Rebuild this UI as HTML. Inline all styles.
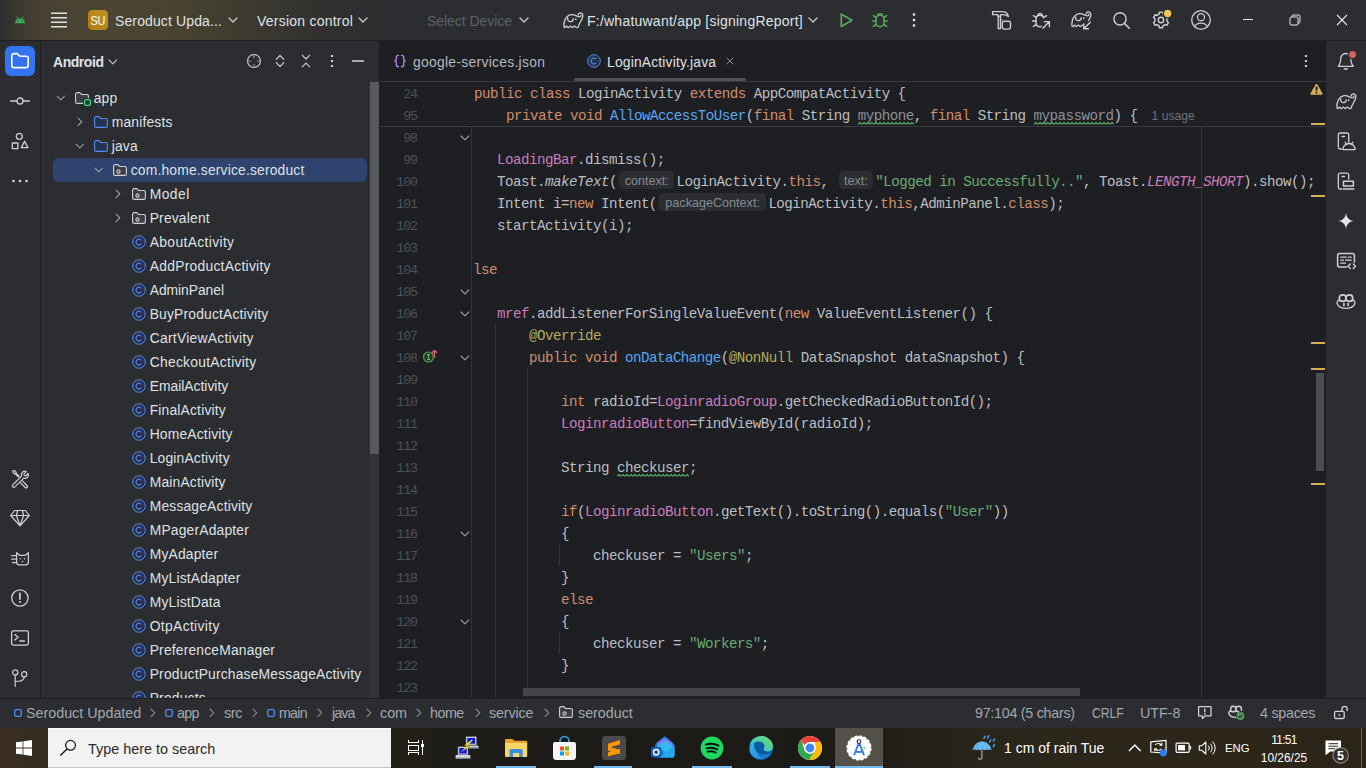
<!DOCTYPE html><html><head><meta charset="utf-8"><title>LoginActivity.java</title><style>
*{box-sizing:border-box;margin:0;padding:0}
html,body{width:1366px;height:768px;overflow:hidden;background:#2b2d30;font-family:"Liberation Sans",sans-serif;color:#dfe1e5}
#root{position:relative;width:1366px;height:768px;overflow:hidden}
#root>div,#root>svg{position:absolute}
svg{overflow:visible}
.tt{font-size:14px;letter-spacing:.23px;color:#dfe1e5;white-space:nowrap;line-height:20px}
.row{height:24px;line-height:24px;font-size:13.85px;letter-spacing:.18px;color:#dfe1e5;white-space:nowrap}
.tab{font-size:13.85px;letter-spacing:.18px;line-height:20px;white-space:nowrap}
.ln{left:380px;width:37px;text-align:right;font-family:"Liberation Mono",monospace;font-size:13.33px;letter-spacing:-1.07px;color:#4b5059;height:22px;line-height:22px;white-space:pre}
.cl{font-family:"Liberation Mono",monospace;font-size:14.2px;letter-spacing:-0.5214px;color:#bcbec4;height:22px;line-height:22px;white-space:pre}
.k{color:#cf8e6d}.s{color:#6aab73}.f{color:#c77dbb}.m{color:#56a8f5}.a{color:#b3ae60}.i{font-style:italic}
.fi{color:#c77dbb;font-style:italic}
.u{color:#8d8f95}
.hint{display:inline-block;font-family:"Liberation Sans",sans-serif;font-size:12.6px;color:#868a91;background:#2b2d30;border-radius:4px;height:18px;line-height:20px;vertical-align:1px;text-align:center;margin:0 2.5px;letter-spacing:0}
.usage{letter-spacing:0;font-family:"Liberation Sans",sans-serif;font-size:12.2px;color:#6f737a;margin-left:14px}
.st{height:29px;line-height:31px;font-size:14.3px;color:#a3a7af;white-space:nowrap}
</style></head><body><div id="root"><div style="left:0px;top:0px;width:1366px;height:40px;background:linear-gradient(90deg,#2d2e30 0px,#3a382f 18px,#464132 40px,#4b4533 90px,#48432f 180px,#3d3b30 240px,#34332f 300px,#2e2e30 360px,#2b2d30 410px);"></div><div style="left:0px;top:40px;width:1366px;height:1px;background:#1e1f22;"></div><div style="left:0px;top:41px;width:40px;height:657px;background:#2b2d30;"></div><div style="left:40px;top:41px;width:1px;height:657px;background:#1e1f22;"></div><div style="left:41px;top:41px;width:338px;height:657px;background:#2b2d30;"></div><div style="left:379px;top:41px;width:1px;height:657px;background:#1e1f22;"></div><div style="left:380px;top:41px;width:946px;height:657px;background:#1e1f22;"></div><div style="left:1326px;top:41px;width:40px;height:657px;background:#2b2d30;"></div><div style="left:0px;top:698px;width:1366px;height:1px;background:#1e1f22;"></div><div style="left:0px;top:699px;width:1366px;height:29px;background:#2b2d30;"></div><svg style="left:14px;top:14px" width="12" height="10" viewBox="0 0 12 10"><path d="M1 9.200a5 4.800 0 0 1 10 0z" fill="#37b05c"/><path d="M2.800 3l1.400 2.200M9.200 3l-1.400 2.200" stroke="#37b05c" stroke-width="1" stroke-linecap="round"/><circle cx="3.900" cy="7" r=".65" fill="#3b3a30"/><circle cx="8.100" cy="7" r=".65" fill="#3b3a30"/></svg><svg style="left:51px;top:12px" width="16" height="16" viewBox="0 0 16 16"><path d="M0 1.200h16M0 5.700h16M0 10.200h16M0 14.700h16" stroke="#dfe1e5" stroke-width="1.400"/></svg><div style="left:88px;top:10px;width:20px;height:20px;border-radius:4.500px;background:linear-gradient(45deg,#b47c18,#bd9420);color:#fff;font-size:13px;text-align:center;line-height:21px;letter-spacing:-.2px"><span style="display:inline-block;transform:scaleX(.84)">SU</span></div><div class="tt" style="left:115px;top:11px;letter-spacing:.12px">Seroduct Upda...</div><svg style="left:228px;top:17.0px" width="10" height="6" viewBox="0 0 10 6"><path d="M1 1l4 4 4-4" fill="none" stroke="#ced0d6" stroke-width="1.2" stroke-linejoin="round" stroke-linecap="round"/></svg><div class="tt" style="left:257px;top:11px;">Version control</div><svg style="left:358px;top:17.0px" width="10" height="6" viewBox="0 0 10 6"><path d="M1 1l4 4 4-4" fill="none" stroke="#ced0d6" stroke-width="1.2" stroke-linejoin="round" stroke-linecap="round"/></svg><div class="tt" style="left:427px;top:11px;color:#5f6269;letter-spacing:-.05px">Select Device</div><svg style="left:519px;top:17.0px" width="10" height="6" viewBox="0 0 10 6"><path d="M1 1l4 4 4-4" fill="none" stroke="#ced0d6" stroke-width="1.2" stroke-linejoin="round" stroke-linecap="round"/></svg><svg style="left:563px;top:12.3px" width="20" height="16" viewBox="0 0 20 16"><path d="M15.3 2.9C15.2 1.3 17 .4 18.4 1.100C20 1.900 20 4.500 19.200 6.500C18 9.500 15.600 12 15.200 15.200Q13.600 16.100 12.600 14.900Q11.400 13.200 10.200 14.900Q9.300 16.100 8.400 14.900Q7.300 13.200 6.200 14.900Q5.300 16.100 4.400 14.900Q3.500 13.400 2.800 14.900Q2 16.100 1 15C.300 10 2.500 3.200 8.500 2.600C12 2.300 14 4.800 16.500 4.900C17.600 4.900 18.200 4 17.800 3.300" fill="none" stroke="#ced0d6" stroke-width="1.3" stroke-linejoin="round" stroke-linecap="round"/><path d="M4.700 5.800C4.200 8.500 6 10 8 9.600C9.600 9.200 10.400 8 10.200 6.600" fill="none" stroke="#ced0d6" stroke-width="1.3" stroke-linejoin="round" stroke-linecap="round"/><circle cx="12.800" cy="7.200" r=".85" fill="#ced0d6"/></svg><div class="tt" style="left:587px;top:11px;">F:/whatuwant/app [signingReport]</div><svg style="left:808px;top:17.0px" width="10" height="6" viewBox="0 0 10 6"><path d="M1 1l4 4 4-4" fill="none" stroke="#ced0d6" stroke-width="1.2" stroke-linejoin="round" stroke-linecap="round"/></svg><svg style="left:838px;top:11px" width="18" height="18" viewBox="0 0 18 18"><path d="M3.300 3.200L14 9.300 3.300 15.500z" fill="none" stroke="#5aa860" stroke-width="1.7" stroke-linejoin="round" stroke-linecap="round"/></svg><svg style="left:870px;top:9px" width="20" height="20" viewBox="0 0 20 20"><path d="M10 6.200c-2.400 0-4 1.700-4 4v3.300c0 2.400 1.700 4.200 4 4.200s4-1.800 4-4.200v-3.300c0-2.300-1.600-4-4-4z" fill="none" stroke="#5aa860" stroke-width="1.5" stroke-linejoin="round" stroke-linecap="round"/><path d="M7.400 6.600a2.700 2.900 0 0 1 5.200 0" fill="none" stroke="#5aa860" stroke-width="1.5" stroke-linejoin="round" stroke-linecap="round"/><path d="M6 12H2.600M6.400 8.800l-3-2.200M6.400 15.300l-3 2.100M14 12h3.400M13.600 8.800l3-2.200M13.600 15.300l3 2.100" fill="none" stroke="#5aa860" stroke-width="1.5" stroke-linejoin="round" stroke-linecap="round"/></svg><svg style="left:912px;top:12px" width="4" height="16" viewBox="0 0 4 16"><rect x=".800" y="1.300" width="2.500" height="2.500" rx=".700" fill="#dfe1e5"/><rect x=".800" y="6.800" width="2.500" height="2.500" rx=".700" fill="#dfe1e5"/><rect x=".800" y="12.300" width="2.500" height="2.500" rx=".700" fill="#dfe1e5"/></svg><svg style="left:991px;top:10px" width="22" height="20" viewBox="0 0 22 20"><path d="M1.600 1.700h9.500c3.300 0 5.700 1.800 6.300 4.800-1.600-1.300-3.200-1.800-5.400-1.800H9.700v1.500H6.800V4.700H1.600z" fill="none" stroke="#ced0d6" stroke-width="1.3" stroke-linejoin="round" stroke-linecap="round"/><path d="M7.200 6.400v12.300h2.200V6.400" fill="none" stroke="#ced0d6" stroke-width="1.3" stroke-linejoin="round" stroke-linecap="round"/><path d="M9.400 10h1.600" fill="none" stroke="#ced0d6" stroke-width="1.2" stroke-linejoin="round" stroke-linecap="round"/><rect x="11.300" y="11.300" width="8.200" height="7.800" rx="2" fill="none" stroke="#ced0d6" stroke-width="1.4" stroke-linejoin="round" stroke-linecap="round"/></svg><svg style="left:1030px;top:9px" width="22" height="22" viewBox="0 0 22 22"><path d="M13.600 8.500C13 7 11.600 6.200 10 6.200c-2.400 0-4 1.700-4 4v3.300c0 2.400 1.700 4.200 4 4.200.500 0 1-.100 1.400-.250" fill="none" stroke="#ced0d6" stroke-width="1.4" stroke-linejoin="round" stroke-linecap="round"/><path d="M7.400 6.600a2.700 2.900 0 0 1 5.200 0" fill="none" stroke="#ced0d6" stroke-width="1.4" stroke-linejoin="round" stroke-linecap="round"/><path d="M6 12H2.600M6.400 8.800l-3-2.200M6.400 15.300l-3 2.100M13.600 8.800l3-2.200" fill="none" stroke="#ced0d6" stroke-width="1.4" stroke-linejoin="round" stroke-linecap="round"/><path d="M12.800 19.200l6.400-6.400M14.300 12.600h5.100v5.100" fill="none" stroke="#ced0d6" stroke-width="1.4" stroke-linejoin="round" stroke-linecap="round"/></svg><svg style="left:0;top:0" width="0" height="0"><defs><clipPath id="ec"><path d="M-1-1h22v11h-9v8h-13z"/></clipPath></defs></svg><svg style="left:1071px;top:11.3px" width="20" height="16" viewBox="0 0 20 16"><g clip-path="url(#ec)"><path d="M15.3 2.9C15.2 1.3 17 .4 18.4 1.100C20 1.900 20 4.500 19.200 6.500C18 9.500 15.600 12 15.200 15.200Q13.600 16.100 12.600 14.900Q11.400 13.200 10.200 14.900Q9.300 16.100 8.400 14.900Q7.300 13.200 6.200 14.900Q5.300 16.100 4.400 14.900Q3.500 13.400 2.800 14.900Q2 16.100 1 15C.300 10 2.500 3.200 8.500 2.600C12 2.300 14 4.800 16.500 4.900C17.600 4.900 18.200 4 17.800 3.300" fill="none" stroke="#ced0d6" stroke-width="1.3" stroke-linejoin="round" stroke-linecap="round"/><path d="M4.700 5.800C4.200 8.500 6 10 8 9.600C9.600 9.200 10.400 8 10.200 6.600" fill="none" stroke="#ced0d6" stroke-width="1.3" stroke-linejoin="round" stroke-linecap="round"/><circle cx="12.800" cy="7.200" r=".85" fill="#ced0d6"/></g></svg><svg style="left:1082px;top:21px" width="10" height="9" viewBox="0 0 10 9"><path d="M8.300 1.200L2 7.500M1.800 3v4.700h4.700" fill="none" stroke="#ced0d6" stroke-width="1.4" stroke-linejoin="round" stroke-linecap="round"/></svg><svg style="left:1111px;top:10px" width="20" height="20" viewBox="0 0 20 20"><circle cx="9" cy="8.900" r="6.100" fill="none" stroke="#ced0d6" stroke-width="1.4" stroke-linejoin="round" stroke-linecap="round"/><path d="M13.500 13.500l4.700 4.600" fill="none" stroke="#ced0d6" stroke-width="1.5" stroke-linejoin="round" stroke-linecap="round"/></svg><svg style="left:1150px;top:8px" width="24" height="24" viewBox="0 0 24 24"><path d="M9.36 4.27L12.64 4.27L12.89 6.20L15.08 7.47L16.87 6.71L18.51 9.56L16.97 10.73L16.97 13.27L18.51 14.44L16.87 17.29L15.08 16.53L12.89 17.80L12.64 19.73L9.36 19.73L9.11 17.80L6.92 16.53L5.13 17.29L3.49 14.44L5.03 13.27L5.03 10.73L3.49 9.56L5.13 6.71L6.92 7.47L9.11 6.20z" fill="none" stroke="#ced0d6" stroke-width="1.4" stroke-linejoin="round" stroke-linecap="round"/><circle cx="11" cy="12" r="2.700" fill="none" stroke="#ced0d6" stroke-width="1.4" stroke-linejoin="round" stroke-linecap="round"/><circle cx="17.600" cy="5.500" r="5" fill="#2b2d30"/><circle cx="17.600" cy="5.500" r="3.700" fill="#f2c55c"/></svg><svg style="left:1190px;top:9px" width="22" height="22" viewBox="0 0 22 22"><circle cx="11" cy="11" r="9.300" fill="none" stroke="#ced0d6" stroke-width="1.3" stroke-linejoin="round" stroke-linecap="round"/><circle cx="11" cy="8.200" r="3.500" fill="none" stroke="#ced0d6" stroke-width="1.3" stroke-linejoin="round" stroke-linecap="round"/><path d="M4.600 17.700c1.200-2.400 3.600-3.500 6.400-3.500s5.200 1.100 6.400 3.500" fill="none" stroke="#ced0d6" stroke-width="1.3" stroke-linejoin="round" stroke-linecap="round"/></svg><div style="left:1243px;top:19px;width:10px;height:1px;background:#e6e7ea;"></div><svg style="left:1289px;top:14px" width="12" height="12" viewBox="0 0 12 12"><rect x="1" y="3" width="8" height="8" rx="1" fill="none" stroke="#e6e7ea" stroke-width="1"/><path d="M3 3V2a1 1 0 0 1 1-1h6a1 1 0 0 1 1 1v6a1 1 0 0 1-1 1H9" fill="none" stroke="#e6e7ea" stroke-width="1"/></svg><svg style="left:1337px;top:15px" width="10" height="10" viewBox="0 0 10 10"><path d="M0 0l10 10M10 0L0 10" stroke="#e6e7ea" stroke-width="1.100"/></svg><div style="left:5px;top:46px;width:30px;height:30px;background:#3574f0;border-radius:6px"></div><svg style="left:10px;top:52px" width="20" height="18" viewBox="0 0 20 18"><path d="M1.800 3.600a2 2 0 0 1 2-2h3.600l2.400 2.600h6.400a2 2 0 0 1 2 2v7.400a2 2 0 0 1-2 2H3.800a2 2 0 0 1-2-2z" fill="none" stroke="#fff" stroke-width="1.6" stroke-linejoin="round" stroke-linecap="round"/></svg><svg style="left:10px;top:96px" width="20" height="10" viewBox="0 0 20 10"><circle cx="10" cy="5" r="3" fill="none" stroke="#ced0d6" stroke-width="1.3" stroke-linejoin="round" stroke-linecap="round"/><path d="M.500 5h6.300M13.200 5h6.300" fill="none" stroke="#ced0d6" stroke-width="1.3" stroke-linejoin="round" stroke-linecap="round"/></svg><svg style="left:10px;top:131px" width="20" height="20" viewBox="0 0 20 20"><circle cx="9.300" cy="5.300" r="3" fill="none" stroke="#ced0d6" stroke-width="1.3" stroke-linejoin="round" stroke-linecap="round"/><rect x="2.300" y="12" width="5.600" height="5.600" fill="none" stroke="#ced0d6" stroke-width="1.3" stroke-linejoin="round" stroke-linecap="round"/><path d="M14.600 10.300l3.300 6.300h-6.600z" fill="none" stroke="#ced0d6" stroke-width="1.3" stroke-linejoin="round" stroke-linecap="round"/></svg><svg style="left:10px;top:179px" width="20" height="4" viewBox="0 0 20 4"><circle cx="3.500" cy="2" r="1.300" fill="#ced0d6"/><circle cx="10" cy="2" r="1.300" fill="#ced0d6"/><circle cx="16.500" cy="2" r="1.300" fill="#ced0d6"/></svg><svg style="left:10.700px;top:469px" width="18.600" height="18.600" viewBox="0 0 20 20"><path d="M1.900 17l9.500-9.500a3.700 3.700 0 0 1 5-4.700l-2.500 2.500.300 1.700 1.700.300 2.500-2.500a3.700 3.700 0 0 1-4.700 5L4.200 19.300a1.600 1.600 0 0 1-2.300-2.300z" fill="none" stroke="#ced0d6" stroke-width="1.3" stroke-linejoin="round" stroke-linecap="round"/><path d="M12.300 12.800l5 5.200a1.300 1.300 0 0 1-1.900 1.900l-5.200-5M7.800 8.400L4.900 5.500 2.500 4.300 1.800 2.300 2.600 1.600l2 .700 1.200 2.400 2.900 2.900" fill="none" stroke="#ced0d6" stroke-width="1.3" stroke-linejoin="round" stroke-linecap="round"/></svg><svg style="left:10px;top:509px" width="20" height="18" viewBox="0 0 20 18"><path d="M4.600 1.500h10.800l3.900 5L10 16.800.700 6.500zM.700 6.500h18.600M7.600 1.500L6.400 6.500 10 16.800l3.600-10.300-1.200-5" fill="none" stroke="#ced0d6" stroke-width="1.2" stroke-linejoin="round" stroke-linecap="round"/></svg><svg style="left:10px;top:551px" width="20" height="16" viewBox="0 0 20 16"><path d="M6.600 1.600l3 2.700h5.800l3-2.700v9.400a2.800 2.800 0 0 1-2.800 2.800H9.400a2.800 2.800 0 0 1-2.800-2.800zM1.600 4.500h5M1.600 8h5M2.600 11.500h4" fill="none" stroke="#ced0d6" stroke-width="1.25" stroke-linejoin="round" stroke-linecap="round"/><circle cx="10.400" cy="7.700" r=".8" fill="#ced0d6"/><circle cx="14.600" cy="7.700" r=".8" fill="#ced0d6"/><path d="M11.700 10.300h1.600l-.800.900z" fill="#ced0d6" stroke="#ced0d6" stroke-width=".5"/></svg><svg style="left:10px;top:588px" width="20" height="20" viewBox="0 0 20 20"><circle cx="9.900" cy="10" r="8.200" fill="none" stroke="#ced0d6" stroke-width="1.3" stroke-linejoin="round" stroke-linecap="round"/><path d="M9.900 5.300v5.800" fill="none" stroke="#ced0d6" stroke-width="1.7" stroke-linejoin="round" stroke-linecap="round"/><circle cx="9.900" cy="14" r="1.050" fill="#ced0d6"/></svg><svg style="left:10px;top:629px" width="20" height="18" viewBox="0 0 20 18"><rect x="1.600" y="1.900" width="16.800" height="14.200" rx="1.800" fill="none" stroke="#ced0d6" stroke-width="1.3" stroke-linejoin="round" stroke-linecap="round"/><path d="M4.800 5.600l3.400 2.700-3.400 2.700M9.800 12h4.600" fill="none" stroke="#ced0d6" stroke-width="1.3" stroke-linejoin="round" stroke-linecap="round"/></svg><svg style="left:10px;top:668px" width="20" height="20" viewBox="0 0 20 20"><circle cx="5.200" cy="4.500" r="2.600" fill="none" stroke="#ced0d6" stroke-width="1.2" stroke-linejoin="round" stroke-linecap="round"/><circle cx="14.200" cy="6.200" r="2.600" fill="none" stroke="#ced0d6" stroke-width="1.2" stroke-linejoin="round" stroke-linecap="round"/><path d="M5.200 7.200v11.300M14.200 8.900c0 3.600-3.500 4.600-9 4.600" fill="none" stroke="#ced0d6" stroke-width="1.2" stroke-linejoin="round" stroke-linecap="round"/></svg><div class="row" style="left:53px;top:52px;font-weight:bold;font-size:14px;letter-spacing:-.45px;height:20px;line-height:20px">Android</div><svg style="left:108.2px;top:59.1px" width="9.6" height="5.8" viewBox="0 0 9.6 5.8"><path d="M1 1l3.8 3.8 3.8-3.8" fill="none" stroke="#c0c3c9" stroke-width="1.1" stroke-linejoin="round" stroke-linecap="round"/></svg><svg style="left:246px;top:53px" width="16" height="16" viewBox="0 0 16 16"><circle cx="8" cy="8" r="6.500" fill="none" stroke="#ced0d6" stroke-width="1.1" stroke-linejoin="round" stroke-linecap="round"/><path d="M8 1.500v3M8 11.500v3M1.500 8h3M11.500 8h3" fill="none" stroke="#9da0a8" stroke-width="1.1" stroke-linejoin="round" stroke-linecap="round"/></svg><svg style="left:275px;top:54px" width="10" height="14" viewBox="0 0 10 14"><path d="M1.200 5.300L5 1.500l3.800 3.800M1.200 8.700L5 12.500l3.800-3.800" fill="none" stroke="#ced0d6" stroke-width="1.1" stroke-linejoin="round" stroke-linecap="round"/></svg><svg style="left:301px;top:54px" width="10" height="14" viewBox="0 0 10 14"><path d="M1.200 1.200L5 5l3.800-3.800M1.200 12.900L5 9.100l3.800 3.800" fill="none" stroke="#ced0d6" stroke-width="1.1" stroke-linejoin="round" stroke-linecap="round"/></svg><svg style="left:330px;top:54px" width="4" height="14" viewBox="0 0 4 14"><rect x=".900" y=".900" width="2.200" height="2.200" rx=".500" fill="#ced0d6"/><rect x=".900" y="5.900" width="2.200" height="2.200" rx=".500" fill="#ced0d6"/><rect x=".900" y="10.900" width="2.200" height="2.200" rx=".500" fill="#ced0d6"/></svg><div style="left:352px;top:60.4px;width:12px;height:1.3px;background:#a8abb2;"></div><div style="left:53px;top:158px;width:314px;height:24px;background:#2e436e;border-radius:5px"></div><div style="left:369px;top:82px;width:10px;height:616px;background:#313336;"></div><div style="left:370px;top:82px;width:8.5px;height:372px;background:#58595c;"></div><svg style="left:55.800000000000004px;top:95.1px" width="9.6" height="5.8" viewBox="0 0 9.6 5.8"><path d="M1 1l3.8 3.8 3.8-3.8" fill="none" stroke="#a6a9af" stroke-width="1.05" stroke-linejoin="round" stroke-linecap="round"/></svg><svg style="left:75px;top:92px" width="14" height="12" viewBox="0 0 14 12"><path d="M.600 2.100A1.500 1.500 0 0 1 2.100.600h2.700l1.900 1.900h5.200a1.500 1.500 0 0 1 1.500 1.500v5.900a1.500 1.500 0 0 1-1.500 1.500H2.100A1.500 1.500 0 0 1 .600 9.900z" fill="#3c3e43" stroke="#ced0d6" stroke-width="1.100" stroke-linejoin="round"/></svg><svg style="left:83px;top:98px" width="9" height="9" viewBox="0 0 9 9"><rect x="0" y="0" width="9" height="9" fill="#2b2d30"/><rect x="1.600" y="1.600" width="5.800" height="5.800" rx="1.400" fill="#253627" stroke="#3ddc84" stroke-width="1.300"/></svg><div class="row" style="left:93.7px;top:86px;">app</div><svg style="left:76.89999999999999px;top:117.2px" width="5.8" height="9.6" viewBox="0 0 5.8 9.6"><path d="M1 1l3.8 3.8-3.8 3.8" fill="none" stroke="#a6a9af" stroke-width="1.05" stroke-linejoin="round" stroke-linecap="round"/></svg><svg style="left:94px;top:116px" width="14" height="12" viewBox="0 0 14 12"><path d="M.600 2.100A1.500 1.500 0 0 1 2.100.600h2.700l1.900 1.900h5.200a1.500 1.500 0 0 1 1.500 1.500v5.900a1.500 1.500 0 0 1-1.500 1.500H2.100A1.500 1.500 0 0 1 .600 9.900z" fill="#25324d" stroke="#548af7" stroke-width="1.100" stroke-linejoin="round"/></svg><div class="row" style="left:111.7px;top:110px;">manifests</div><svg style="left:74.8px;top:143.1px" width="9.6" height="5.8" viewBox="0 0 9.6 5.8"><path d="M1 1l3.8 3.8 3.8-3.8" fill="none" stroke="#a6a9af" stroke-width="1.05" stroke-linejoin="round" stroke-linecap="round"/></svg><svg style="left:94px;top:140px" width="14" height="12" viewBox="0 0 14 12"><path d="M.600 2.100A1.500 1.500 0 0 1 2.100.600h2.700l1.900 1.900h5.200a1.500 1.500 0 0 1 1.500 1.500v5.900a1.500 1.500 0 0 1-1.500 1.500H2.100A1.500 1.500 0 0 1 .600 9.900z" fill="#25324d" stroke="#548af7" stroke-width="1.100" stroke-linejoin="round"/></svg><div class="row" style="left:111.7px;top:134px;">java</div><svg style="left:93.8px;top:167.1px" width="9.6" height="5.8" viewBox="0 0 9.6 5.8"><path d="M1 1l3.8 3.8 3.8-3.8" fill="none" stroke="#a6a9af" stroke-width="1.05" stroke-linejoin="round" stroke-linecap="round"/></svg><svg style="left:113px;top:164px" width="14" height="12" viewBox="0 0 14 12"><path d="M.600 2.100A1.500 1.500 0 0 1 2.100.600h2.700l1.900 1.900h5.200a1.500 1.500 0 0 1 1.500 1.500v5.900a1.500 1.500 0 0 1-1.500 1.500H2.100A1.500 1.500 0 0 1 .600 9.900z" fill="#3c3e43" stroke="#ced0d6" stroke-width="1.100" stroke-linejoin="round"/></svg><svg style="left:115.6px;top:168.5px" width="5" height="5" viewBox="0 0 5 5"><circle cx="2.500" cy="2.500" r="1.600" fill="none" stroke="#ced0d6" stroke-width="1.100"/></svg><div class="row" style="left:130.7px;top:158px;">com.home.service.seroduct</div><svg style="left:114.89999999999999px;top:189.2px" width="5.8" height="9.6" viewBox="0 0 5.8 9.6"><path d="M1 1l3.8 3.8-3.8 3.8" fill="none" stroke="#a6a9af" stroke-width="1.05" stroke-linejoin="round" stroke-linecap="round"/></svg><svg style="left:132px;top:188px" width="14" height="12" viewBox="0 0 14 12"><path d="M.600 2.100A1.500 1.500 0 0 1 2.100.600h2.700l1.900 1.900h5.200a1.500 1.500 0 0 1 1.500 1.500v5.900a1.500 1.500 0 0 1-1.500 1.500H2.100A1.500 1.500 0 0 1 .600 9.900z" fill="#3c3e43" stroke="#ced0d6" stroke-width="1.100" stroke-linejoin="round"/></svg><svg style="left:134.6px;top:192.5px" width="5" height="5" viewBox="0 0 5 5"><circle cx="2.500" cy="2.500" r="1.600" fill="none" stroke="#ced0d6" stroke-width="1.100"/></svg><div class="row" style="left:149.7px;top:182px;letter-spacing:0.47px">Model</div><svg style="left:114.89999999999999px;top:213.2px" width="5.8" height="9.6" viewBox="0 0 5.8 9.6"><path d="M1 1l3.8 3.8-3.8 3.8" fill="none" stroke="#a6a9af" stroke-width="1.05" stroke-linejoin="round" stroke-linecap="round"/></svg><svg style="left:132px;top:212px" width="14" height="12" viewBox="0 0 14 12"><path d="M.600 2.100A1.500 1.500 0 0 1 2.100.600h2.700l1.900 1.900h5.200a1.500 1.500 0 0 1 1.500 1.500v5.900a1.500 1.500 0 0 1-1.500 1.500H2.100A1.500 1.500 0 0 1 .600 9.900z" fill="#3c3e43" stroke="#ced0d6" stroke-width="1.100" stroke-linejoin="round"/></svg><svg style="left:134.6px;top:216.5px" width="5" height="5" viewBox="0 0 5 5"><circle cx="2.500" cy="2.500" r="1.600" fill="none" stroke="#ced0d6" stroke-width="1.100"/></svg><div class="row" style="left:149.7px;top:206px;">Prevalent</div><svg style="left:132px;top:235px" width="14" height="14" viewBox="0 0 14 14"><circle cx="7" cy="7" r="6.300" fill="#25324d" stroke="#548af7" stroke-width="1"/><path d="M9.300 5.300a2.900 2.900 0 1 0 0 3.400" fill="none" stroke="#548af7" stroke-width="1.050"/></svg><div class="row" style="left:149.7px;top:230px;letter-spacing:0.36px">AboutActivity</div><svg style="left:132px;top:259px" width="14" height="14" viewBox="0 0 14 14"><circle cx="7" cy="7" r="6.300" fill="#25324d" stroke="#548af7" stroke-width="1"/><path d="M9.300 5.300a2.900 2.900 0 1 0 0 3.400" fill="none" stroke="#548af7" stroke-width="1.050"/></svg><div class="row" style="left:149.7px;top:254px;letter-spacing:0.27px">AddProductActivity</div><svg style="left:132px;top:283px" width="14" height="14" viewBox="0 0 14 14"><circle cx="7" cy="7" r="6.300" fill="#25324d" stroke="#548af7" stroke-width="1"/><path d="M9.300 5.300a2.900 2.900 0 1 0 0 3.400" fill="none" stroke="#548af7" stroke-width="1.050"/></svg><div class="row" style="left:149.7px;top:278px;letter-spacing:-0.04px">AdminPanel</div><svg style="left:132px;top:307px" width="14" height="14" viewBox="0 0 14 14"><circle cx="7" cy="7" r="6.300" fill="#25324d" stroke="#548af7" stroke-width="1"/><path d="M9.300 5.300a2.900 2.900 0 1 0 0 3.400" fill="none" stroke="#548af7" stroke-width="1.050"/></svg><div class="row" style="left:149.7px;top:302px;">BuyProductActivity</div><svg style="left:132px;top:331px" width="14" height="14" viewBox="0 0 14 14"><circle cx="7" cy="7" r="6.300" fill="#25324d" stroke="#548af7" stroke-width="1"/><path d="M9.300 5.300a2.900 2.900 0 1 0 0 3.400" fill="none" stroke="#548af7" stroke-width="1.050"/></svg><div class="row" style="left:149.7px;top:326px;letter-spacing:0.27px">CartViewActivity</div><svg style="left:132px;top:355px" width="14" height="14" viewBox="0 0 14 14"><circle cx="7" cy="7" r="6.300" fill="#25324d" stroke="#548af7" stroke-width="1"/><path d="M9.300 5.300a2.900 2.900 0 1 0 0 3.400" fill="none" stroke="#548af7" stroke-width="1.050"/></svg><div class="row" style="left:149.7px;top:350px;letter-spacing:0.27px">CheckoutActivity</div><svg style="left:132px;top:379px" width="14" height="14" viewBox="0 0 14 14"><circle cx="7" cy="7" r="6.300" fill="#25324d" stroke="#548af7" stroke-width="1"/><path d="M9.300 5.300a2.900 2.900 0 1 0 0 3.400" fill="none" stroke="#548af7" stroke-width="1.050"/></svg><div class="row" style="left:149.7px;top:374px;letter-spacing:0px">EmailActivity</div><svg style="left:132px;top:403px" width="14" height="14" viewBox="0 0 14 14"><circle cx="7" cy="7" r="6.300" fill="#25324d" stroke="#548af7" stroke-width="1"/><path d="M9.300 5.300a2.900 2.900 0 1 0 0 3.400" fill="none" stroke="#548af7" stroke-width="1.050"/></svg><div class="row" style="left:149.7px;top:398px;">FinalActivity</div><svg style="left:132px;top:427px" width="14" height="14" viewBox="0 0 14 14"><circle cx="7" cy="7" r="6.300" fill="#25324d" stroke="#548af7" stroke-width="1"/><path d="M9.300 5.300a2.900 2.900 0 1 0 0 3.400" fill="none" stroke="#548af7" stroke-width="1.050"/></svg><div class="row" style="left:149.7px;top:422px;">HomeActivity</div><svg style="left:132px;top:451px" width="14" height="14" viewBox="0 0 14 14"><circle cx="7" cy="7" r="6.300" fill="#25324d" stroke="#548af7" stroke-width="1"/><path d="M9.300 5.300a2.900 2.900 0 1 0 0 3.400" fill="none" stroke="#548af7" stroke-width="1.050"/></svg><div class="row" style="left:149.7px;top:446px;">LoginActivity</div><svg style="left:132px;top:475px" width="14" height="14" viewBox="0 0 14 14"><circle cx="7" cy="7" r="6.300" fill="#25324d" stroke="#548af7" stroke-width="1"/><path d="M9.300 5.300a2.900 2.900 0 1 0 0 3.400" fill="none" stroke="#548af7" stroke-width="1.050"/></svg><div class="row" style="left:149.7px;top:470px;">MainActivity</div><svg style="left:132px;top:499px" width="14" height="14" viewBox="0 0 14 14"><circle cx="7" cy="7" r="6.300" fill="#25324d" stroke="#548af7" stroke-width="1"/><path d="M9.300 5.300a2.900 2.900 0 1 0 0 3.400" fill="none" stroke="#548af7" stroke-width="1.050"/></svg><div class="row" style="left:149.7px;top:494px;">MessageActivity</div><svg style="left:132px;top:523px" width="14" height="14" viewBox="0 0 14 14"><circle cx="7" cy="7" r="6.300" fill="#25324d" stroke="#548af7" stroke-width="1"/><path d="M9.300 5.300a2.900 2.900 0 1 0 0 3.400" fill="none" stroke="#548af7" stroke-width="1.050"/></svg><div class="row" style="left:149.7px;top:518px;">MPagerAdapter</div><svg style="left:132px;top:547px" width="14" height="14" viewBox="0 0 14 14"><circle cx="7" cy="7" r="6.300" fill="#25324d" stroke="#548af7" stroke-width="1"/><path d="M9.300 5.300a2.900 2.900 0 1 0 0 3.400" fill="none" stroke="#548af7" stroke-width="1.050"/></svg><div class="row" style="left:149.7px;top:542px;">MyAdapter</div><svg style="left:132px;top:571px" width="14" height="14" viewBox="0 0 14 14"><circle cx="7" cy="7" r="6.300" fill="#25324d" stroke="#548af7" stroke-width="1"/><path d="M9.300 5.300a2.900 2.900 0 1 0 0 3.400" fill="none" stroke="#548af7" stroke-width="1.050"/></svg><div class="row" style="left:149.7px;top:566px;">MyListAdapter</div><svg style="left:132px;top:595px" width="14" height="14" viewBox="0 0 14 14"><circle cx="7" cy="7" r="6.300" fill="#25324d" stroke="#548af7" stroke-width="1"/><path d="M9.300 5.300a2.900 2.900 0 1 0 0 3.400" fill="none" stroke="#548af7" stroke-width="1.050"/></svg><div class="row" style="left:149.7px;top:590px;">MyListData</div><svg style="left:132px;top:619px" width="14" height="14" viewBox="0 0 14 14"><circle cx="7" cy="7" r="6.300" fill="#25324d" stroke="#548af7" stroke-width="1"/><path d="M9.300 5.300a2.900 2.900 0 1 0 0 3.400" fill="none" stroke="#548af7" stroke-width="1.050"/></svg><div class="row" style="left:149.7px;top:614px;letter-spacing:0.35px">OtpActivity</div><svg style="left:132px;top:643px" width="14" height="14" viewBox="0 0 14 14"><circle cx="7" cy="7" r="6.300" fill="#25324d" stroke="#548af7" stroke-width="1"/><path d="M9.300 5.300a2.900 2.900 0 1 0 0 3.400" fill="none" stroke="#548af7" stroke-width="1.050"/></svg><div class="row" style="left:149.7px;top:638px;">PreferenceManager</div><svg style="left:132px;top:667px" width="14" height="14" viewBox="0 0 14 14"><circle cx="7" cy="7" r="6.300" fill="#25324d" stroke="#548af7" stroke-width="1"/><path d="M9.300 5.300a2.900 2.900 0 1 0 0 3.400" fill="none" stroke="#548af7" stroke-width="1.050"/></svg><div class="row" style="left:149.7px;top:662px;">ProductPurchaseMessageActivity</div><div style="left:41px;top:686px;width:328px;height:12px;overflow:hidden;position:absolute"><svg style="position:absolute;left:91px;top:5px" width="14" height="14" viewBox="0 0 14 14"><circle cx="7" cy="7" r="6.300" fill="#25324d" stroke="#548af7" stroke-width="1"/><path d="M9.300 5.300a2.900 2.900 0 1 0 0 3.400" fill="none" stroke="#548af7" stroke-width="1.050"/></svg><div class="row" style="position:absolute;left:108.7px;top:0">Products</div></div><div style="left:380px;top:81px;width:946px;height:1px;background:#393b40;"></div><div style="left:574px;top:78px;width:172px;height:3px;background:#4e5157;border-radius:1.500px"></div><svg style="left:394px;top:54px" width="12" height="14" viewBox="0 0 12 14"><path d="M4.500 1.300c-1.700 0-2.200.700-2.200 2v1.800c0 1-.400 1.600-1.300 1.900.900.300 1.300.900 1.300 1.900v1.800c0 1.300.500 2 2.200 2M7.500 1.300c1.700 0 2.200.700 2.200 2v1.800c0 1 .400 1.600 1.300 1.900-.900.300-1.300.900-1.300 1.900v1.800c0 1.300-.500 2-2.200 2" fill="none" stroke="#b589ec" stroke-width="1.35" stroke-linejoin="round" stroke-linecap="round"/></svg><div class="tab" style="left:413px;top:52px;color:#b4b8bf;letter-spacing:.3px">google-services.json</div><svg style="left:587px;top:54.4px" width="14" height="14" viewBox="0 0 14 14"><circle cx="7" cy="7" r="6.300" fill="#25324d" stroke="#548af7" stroke-width="1"/><path d="M9.300 5.300a2.900 2.900 0 1 0 0 3.400" fill="none" stroke="#548af7" stroke-width="1.050"/></svg><div class="tab" style="left:607px;top:52px;color:#dfe1e5">LoginActivity.java</div><svg style="left:726px;top:57.3px" width="8" height="8" viewBox="0 0 8 8"><path d="M.700.700l6.600 6.600M7.300.700L.700 7.300" stroke="#868a91" stroke-width="1"/></svg><svg style="left:1304px;top:54px" width="4" height="14" viewBox="0 0 4 14"><rect x=".900" y=".900" width="2.200" height="2.200" rx=".500" fill="#ced0d6"/><rect x=".900" y="5.900" width="2.200" height="2.200" rx=".500" fill="#ced0d6"/><rect x=".900" y="10.900" width="2.200" height="2.200" rx=".500" fill="#ced0d6"/></svg><div style="left:380px;top:126px;width:946px;height:1px;background:#393b40;"></div><div style="left:471px;top:127px;width:1px;height:571px;background:#313438;"></div><div style="left:1201px;top:127px;width:1px;height:571px;background:#313438;"></div><div style="left:495px;top:324px;width:1px;height:374px;background:#2f3236;"></div><div style="left:527px;top:368px;width:1px;height:330px;background:#2f3236;"></div><div style="left:559px;top:544px;width:1px;height:22px;background:#2f3236;"></div><div style="left:559px;top:632px;width:1px;height:22px;background:#2f3236;"></div><div class="ln" style="top:84px">24</div><div class="cl" style="left:474px;top:83px;"><span class="k">public class</span> LoginActivity <span class="k">extends</span> AppCompatActivity {</div><div class="ln" style="top:106px">95</div><div class="cl" style="left:506px;top:105px;"><span class="k">private void</span> <span class="m">AllowAccessToUser</span>(<span class="k">final</span> String <span class="u">myphone</span>, <span class="k">final</span> String <span class="u">mypassword</span>) {<span class="usage">1 usage</span></div><div class="ln" style="top:128px">98</div><div class="ln" style="top:150px">99</div><div class="cl" style="left:497px;top:149px;"><span class="f">LoadingBar</span>.dismiss();</div><div class="ln" style="top:172px">100</div><div class="cl" style="left:497px;top:171px;">Toast.<span class="i">makeText</span>(<span class="hint" style="width:54.7px">context:</span>LoginActivity.<span class="k">this</span>, <span class="hint" style="width:33.8px">text:</span><span class="s">"Logged in Successfully.."</span>, Toast.<span class="fi">LENGTH_SHORT</span>).show();</div><div class="ln" style="top:194px">101</div><div class="cl" style="left:497px;top:193px;">Intent i=<span class="k">new</span> Intent(<span class="hint" style="width:106.5px">packageContext:</span>LoginActivity.<span class="k">this</span>,AdminPanel.<span class="k">class</span>);</div><div class="ln" style="top:216px">102</div><div class="cl" style="left:497px;top:215px;">startActivity(i);</div><div class="ln" style="top:238px">103</div><div class="ln" style="top:260px">104</div><div class="cl" style="left:473px;top:259px;"><span class="k">lse</span></div><div class="ln" style="top:282px">105</div><div class="ln" style="top:304px">106</div><div class="cl" style="left:497px;top:303px;"><span class="f">mref</span>.addListenerForSingleValueEvent(<span class="k">new</span> ValueEventListener() {</div><div class="ln" style="top:326px">107</div><div class="cl" style="left:529px;top:325px;"><span class="a">@Override</span></div><div class="ln" style="top:348px">108</div><div class="cl" style="left:529px;top:347px;"><span class="k">public void</span> <span class="m">onDataChange</span>(<span class="a">@NonNull</span> DataSnapshot dataSnapshot) {</div><div class="ln" style="top:370px">109</div><div class="ln" style="top:392px">110</div><div class="cl" style="left:561px;top:391px;"><span class="k">int</span> radioId=<span class="f">LoginradioGroup</span>.getCheckedRadioButtonId();</div><div class="ln" style="top:414px">111</div><div class="cl" style="left:561px;top:413px;"><span class="f">LoginradioButton</span>=findViewById(radioId);</div><div class="ln" style="top:436px">112</div><div class="ln" style="top:458px">113</div><div class="cl" style="left:561px;top:457px;">String checkuser;</div><div class="ln" style="top:480px">114</div><div class="ln" style="top:502px">115</div><div class="cl" style="left:561px;top:501px;"><span class="k">if</span>(<span class="f">LoginradioButton</span>.getText().toString().equals(<span class="s">"User"</span>))</div><div class="ln" style="top:524px">116</div><div class="cl" style="left:561px;top:523px;">{</div><div class="ln" style="top:546px">117</div><div class="cl" style="left:593px;top:545px;">checkuser = <span class="s">"Users"</span>;</div><div class="ln" style="top:568px">118</div><div class="cl" style="left:561px;top:567px;">}</div><div class="ln" style="top:590px">119</div><div class="cl" style="left:561px;top:589px;"><span class="k">else</span></div><div class="ln" style="top:612px">120</div><div class="cl" style="left:561px;top:611px;">{</div><div class="ln" style="top:634px">121</div><div class="cl" style="left:593px;top:633px;">checkuser = <span class="s">"Workers"</span>;</div><div class="ln" style="top:656px">122</div><div class="cl" style="left:561px;top:655px;">}</div><div class="ln" style="top:678px">123</div><svg style="left:0;top:0" width="1" height="1"><path d="M858 124.3L860 122.3L862 124.3L864 122.3L866 124.3L868 122.3L870 124.3L872 122.3L874 124.3L876 122.3L878 124.3L880 122.3L882 124.3L884 122.3L886 124.3L888 122.3L890 124.3L892 122.3L894 124.3L896 122.3L898 124.3L900 122.3L902 124.3L904 122.3L906 124.3L908 122.3L910 124.3L912 122.3L914 124.3" fill="none" stroke="#57a35d" stroke-width="1.05" stroke-linejoin="round"/></svg><svg style="left:0;top:0" width="1" height="1"><path d="M1034 124.3L1036 122.3L1038 124.3L1040 122.3L1042 124.3L1044 122.3L1046 124.3L1048 122.3L1050 124.3L1052 122.3L1054 124.3L1056 122.3L1058 124.3L1060 122.3L1062 124.3L1064 122.3L1066 124.3L1068 122.3L1070 124.3L1072 122.3L1074 124.3L1076 122.3L1078 124.3L1080 122.3L1082 124.3L1084 122.3L1086 124.3L1088 122.3L1090 124.3L1092 122.3L1094 124.3L1096 122.3L1098 124.3L1100 122.3L1102 124.3L1104 122.3L1106 124.3L1108 122.3L1110 124.3L1112 122.3L1114 124.3" fill="none" stroke="#57a35d" stroke-width="1.05" stroke-linejoin="round"/></svg><svg style="left:0;top:0" width="1" height="1"><path d="M617 476.3L619 474.3L621 476.3L623 474.3L625 476.3L627 474.3L629 476.3L631 474.3L633 476.3L635 474.3L637 476.3L639 474.3L641 476.3L643 474.3L645 476.3L647 474.3L649 476.3L651 474.3L653 476.3L655 474.3L657 476.3L659 474.3L661 476.3L663 474.3L665 476.3L667 474.3L669 476.3L671 474.3L673 476.3L675 474.3L677 476.3L679 474.3L681 476.3L683 474.3L685 476.3L687 474.3L689 476.3" fill="none" stroke="#57a35d" stroke-width="1.05" stroke-linejoin="round"/></svg><svg style="left:459.6px;top:134.55px" width="9.8" height="5.9" viewBox="0 0 9.8 5.9"><path d="M1 1l3.9 3.9 3.9-3.9" fill="none" stroke="#9a9da4" stroke-width="1.1" stroke-linejoin="round" stroke-linecap="round"/></svg><svg style="left:459.6px;top:288.55px" width="9.8" height="5.9" viewBox="0 0 9.8 5.9"><path d="M1 1l3.9 3.9 3.9-3.9" fill="none" stroke="#9a9da4" stroke-width="1.1" stroke-linejoin="round" stroke-linecap="round"/></svg><svg style="left:459.6px;top:310.55px" width="9.8" height="5.9" viewBox="0 0 9.8 5.9"><path d="M1 1l3.9 3.9 3.9-3.9" fill="none" stroke="#9a9da4" stroke-width="1.1" stroke-linejoin="round" stroke-linecap="round"/></svg><svg style="left:459.6px;top:354.55px" width="9.8" height="5.9" viewBox="0 0 9.8 5.9"><path d="M1 1l3.9 3.9 3.9-3.9" fill="none" stroke="#9a9da4" stroke-width="1.1" stroke-linejoin="round" stroke-linecap="round"/></svg><svg style="left:459.6px;top:530.55px" width="9.8" height="5.9" viewBox="0 0 9.8 5.9"><path d="M1 1l3.9 3.9 3.9-3.9" fill="none" stroke="#9a9da4" stroke-width="1.1" stroke-linejoin="round" stroke-linecap="round"/></svg><svg style="left:459.6px;top:618.55px" width="9.8" height="5.9" viewBox="0 0 9.8 5.9"><path d="M1 1l3.9 3.9 3.9-3.9" fill="none" stroke="#9a9da4" stroke-width="1.1" stroke-linejoin="round" stroke-linecap="round"/></svg><svg style="left:421px;top:348px" width="18" height="16" viewBox="0 0 18 16"><circle cx="7.500" cy="9" r="5" fill="#253627" stroke="#57965c" stroke-width="1.200"/><path d="M5.900 6.500h3.200M7.500 6.500v5M5.900 11.500h3.200" stroke="#62b568" stroke-width="1.200" fill="none"/><path d="M13.500 9.800V2.300M11.100 4.700l2.400-2.400 2.400 2.400" stroke="#e5606a" stroke-width="1.300" fill="none"/></svg><svg style="left:1310.3px;top:83px" width="13" height="13" viewBox="0 0 13 13"><path d="M6.500 2.100l5 8.600H1.500z" fill="#d6ae58" stroke="#d6ae58" stroke-width="2.200" stroke-linejoin="round"/><path d="M6.500 3.500v4.200" stroke="#1e1f22" stroke-width="1.800"/><rect x="5.600" y="8.700" width="1.800" height="1.800" fill="#1e1f22"/></svg><div style="left:1311px;top:123px;width:14px;height:2px;background:#d6ae58;"></div><div style="left:1311px;top:195px;width:14px;height:2px;background:#d6ae58;"></div><div style="left:1311px;top:342px;width:14px;height:2px;background:#d6ae58;"></div><div style="left:1311px;top:368px;width:14px;height:2px;background:#d6ae58;"></div><div style="left:1311px;top:483px;width:14px;height:2px;background:#d6ae58;"></div><div style="left:1316px;top:373px;width:8px;height:98px;background:#4b4d50;"></div><div style="left:523px;top:688px;width:557px;height:8px;background:#434548;"></div><svg style="left:1336px;top:51px" width="20" height="20" viewBox="0 0 20 20"><path d="M2.300 15.300C4.400 13.200 4.700 11.200 4.700 7.600a5.100 5.100 0 0 1 10.200 0c0 3.600.300 5.600 2.400 7.700z" fill="none" stroke="#ced0d6" stroke-width="1.3" stroke-linejoin="round" stroke-linecap="round"/><path d="M8.200 18h3.200" fill="none" stroke="#ced0d6" stroke-width="1.3" stroke-linejoin="round" stroke-linecap="round"/><circle cx="16.500" cy="3.600" r="4.700" fill="#2b2d30"/><circle cx="16.500" cy="3.600" r="3.500" fill="#db5c5c"/></svg><svg style="left:1336px;top:93.2px" width="20" height="16" viewBox="0 0 20 16"><path d="M15.3 2.9C15.2 1.3 17 .4 18.4 1.100C20 1.900 20 4.500 19.200 6.500C18 9.500 15.600 12 15.200 15.200Q13.600 16.100 12.600 14.900Q11.400 13.200 10.200 14.900Q9.300 16.100 8.400 14.900Q7.300 13.200 6.200 14.900Q5.300 16.100 4.400 14.900Q3.500 13.400 2.800 14.900Q2 16.100 1 15C.300 10 2.500 3.200 8.500 2.600C12 2.300 14 4.800 16.500 4.900C17.600 4.900 18.200 4 17.800 3.300" fill="none" stroke="#ced0d6" stroke-width="1.3" stroke-linejoin="round" stroke-linecap="round"/><path d="M4.700 5.800C4.200 8.500 6 10 8 9.600C9.600 9.200 10.400 8 10.200 6.600" fill="none" stroke="#ced0d6" stroke-width="1.3" stroke-linejoin="round" stroke-linecap="round"/><circle cx="12.800" cy="7.200" r=".85" fill="#ced0d6"/></svg><svg style="left:1336px;top:131px" width="22" height="20" viewBox="0 0 22 20"><path d="M5.600 18H4a1.700 1.700 0 0 1-1.700-1.700V3.700A1.700 1.700 0 0 1 4 2h7a1.700 1.700 0 0 1 1.700 1.700v7.500M6 5.500h2.500" fill="none" stroke="#ced0d6" stroke-width="1.3" stroke-linejoin="round" stroke-linecap="round"/><path d="M6.900 18.600a6.100 6.100 0 0 1 12.200 0zM9.200 11.200l1.400 2.300M16.800 11.200l-1.400 2.300" fill="none" stroke="#ced0d6" stroke-width="1.3" stroke-linejoin="round" stroke-linecap="round"/></svg><svg style="left:1336px;top:171px" width="22" height="20" viewBox="0 0 22 20"><path d="M5.600 18H4a1.700 1.700 0 0 1-1.700-1.700V3.800A1.700 1.700 0 0 1 4 2.100h7a1.700 1.700 0 0 1 1.700 1.700v4.200M6 5.500h2.500" fill="none" stroke="#ced0d6" stroke-width="1.3" stroke-linejoin="round" stroke-linecap="round"/><rect x="7.500" y="10.300" width="9.900" height="4.800" fill="none" stroke="#ced0d6" stroke-width="1.5" stroke-linejoin="round" stroke-linecap="round"/><path d="M7 18h11" fill="none" stroke="#ced0d6" stroke-width="1.3" stroke-linejoin="round" stroke-linecap="round"/></svg><svg style="left:1337px;top:212px" width="18" height="18" viewBox="0 0 18 18"><path d="M9 1c.700 5 3 7.300 8 8-5 .700-7.300 3-8 8-.700-5-3-7.300-8-8 5-.700 7.300-3 8-8z" fill="#e4e6ea"/></svg><svg style="left:1336px;top:252px" width="20" height="18" viewBox="0 0 20 18"><rect x="1.600" y="1.600" width="16.800" height="13.400" rx="2" fill="none" stroke="#ced0d6" stroke-width="1.5" stroke-linejoin="round" stroke-linecap="round"/><path d="M4.800 5.200h5.400M12.400 5.200h2.800M4.800 8.200h2.600M9.600 8.200h5.600M4.800 11.200h4.600" fill="none" stroke="#ced0d6" stroke-width="1.3" stroke-linejoin="round" stroke-linecap="round"/><rect x="11" y="10.800" width="10" height="7" fill="#2b2d30"/><path d="M14.300 12l-2.400 2.300 2.400 2.300M17.200 12l2.400 2.300-2.400 2.300" fill="none" stroke="#ced0d6" stroke-width="1.4" stroke-linejoin="round" stroke-linecap="round"/></svg><svg style="left:1336px;top:292.500px" width="20" height="18.200" viewBox="0 0 22 20"><path d="M3.400 7.400C1.700 8.400 1 9.600 1 11.300 2.400 15 6.500 17 11 17s8.600-2 10-5.700c0-1.700-.700-2.900-2.400-3.900" fill="none" stroke="#ced0d6" stroke-width="1.4" stroke-linejoin="round" stroke-linecap="round"/><path d="M3.700 8.500V5.300c0-2.200 1.400-3.300 3.600-3.300S11 3.300 11 5.300c0-2 1.500-3.300 3.700-3.300s3.600 1.100 3.600 3.300v3.200M3.700 7c0 1.500 1.500 2.200 3.600 2.200S11 8 11 5.500c0 2.500 1.600 3.700 3.700 3.700s3.600-.700 3.600-2.200" fill="none" stroke="#ced0d6" stroke-width="1.9" stroke-linejoin="round" stroke-linecap="round"/><path d="M8.700 11.500v2.500M13.300 11.500v2.500" fill="none" stroke="#ced0d6" stroke-width="1.8" stroke-linejoin="round" stroke-linecap="round"/></svg><svg style="left:14px;top:709px" width="8" height="8" viewBox="0 0 8 8"><rect x=".700" y=".700" width="6.600" height="6.600" rx="1.400" fill="none" stroke="#548af7" stroke-width="1.300"/></svg><div class="st" style="left:26px;top:698px;">Seroduct Updated</div><svg style="left:150.1px;top:707.7px" width="5.8" height="9.6" viewBox="0 0 5.8 9.6"><path d="M1 1l3.8 3.8-3.8 3.8" fill="none" stroke="#868a91" stroke-width="1.1" stroke-linejoin="round" stroke-linecap="round"/></svg><svg style="left:165px;top:709px" width="8" height="8" viewBox="0 0 8 8"><rect x=".700" y=".700" width="6.600" height="6.600" rx="1.400" fill="none" stroke="#548af7" stroke-width="1.300"/></svg><div class="st" style="left:177px;top:698px;letter-spacing:-.75px">app</div><svg style="left:209.1px;top:707.7px" width="5.8" height="9.6" viewBox="0 0 5.8 9.6"><path d="M1 1l3.8 3.8-3.8 3.8" fill="none" stroke="#868a91" stroke-width="1.1" stroke-linejoin="round" stroke-linecap="round"/></svg><div class="st" style="left:224px;top:698px;letter-spacing:-.3px">src</div><svg style="left:252.1px;top:707.7px" width="5.8" height="9.6" viewBox="0 0 5.8 9.6"><path d="M1 1l3.8 3.8-3.8 3.8" fill="none" stroke="#868a91" stroke-width="1.1" stroke-linejoin="round" stroke-linecap="round"/></svg><svg style="left:267px;top:709px" width="8" height="8" viewBox="0 0 8 8"><rect x=".700" y=".700" width="6.600" height="6.600" rx="1.400" fill="none" stroke="#548af7" stroke-width="1.300"/></svg><div class="st" style="left:279px;top:698px;letter-spacing:-.8px">main</div><svg style="left:317.40000000000003px;top:707.7px" width="5.8" height="9.6" viewBox="0 0 5.8 9.6"><path d="M1 1l3.8 3.8-3.8 3.8" fill="none" stroke="#868a91" stroke-width="1.1" stroke-linejoin="round" stroke-linecap="round"/></svg><div class="st" style="left:332px;top:698px;letter-spacing:-.9px">java</div><svg style="left:365.6px;top:707.7px" width="5.8" height="9.6" viewBox="0 0 5.8 9.6"><path d="M1 1l3.8 3.8-3.8 3.8" fill="none" stroke="#868a91" stroke-width="1.1" stroke-linejoin="round" stroke-linecap="round"/></svg><div class="st" style="left:380px;top:698px;">com</div><svg style="left:415.6px;top:707.7px" width="5.8" height="9.6" viewBox="0 0 5.8 9.6"><path d="M1 1l3.8 3.8-3.8 3.8" fill="none" stroke="#868a91" stroke-width="1.1" stroke-linejoin="round" stroke-linecap="round"/></svg><div class="st" style="left:430px;top:698px;letter-spacing:-.5px">home</div><svg style="left:474.6px;top:707.7px" width="5.8" height="9.6" viewBox="0 0 5.8 9.6"><path d="M1 1l3.8 3.8-3.8 3.8" fill="none" stroke="#868a91" stroke-width="1.1" stroke-linejoin="round" stroke-linecap="round"/></svg><div class="st" style="left:489px;top:698px;letter-spacing:-.15px">service</div><svg style="left:543.6px;top:707.7px" width="5.8" height="9.6" viewBox="0 0 5.8 9.6"><path d="M1 1l3.8 3.8-3.8 3.8" fill="none" stroke="#868a91" stroke-width="1.1" stroke-linejoin="round" stroke-linecap="round"/></svg><svg style="left:559px;top:706.3px" width="14" height="12" viewBox="0 0 14 12"><path d="M.600 2.100A1.500 1.500 0 0 1 2.100.600h2.700l1.900 1.900h5.200a1.500 1.500 0 0 1 1.500 1.500v5.900a1.500 1.500 0 0 1-1.500 1.500H2.100A1.500 1.500 0 0 1 .600 9.900z" fill="#3c3e43" stroke="#ced0d6" stroke-width="1.100" stroke-linejoin="round"/></svg><svg style="left:561.6px;top:710.8px" width="5" height="5" viewBox="0 0 5 5"><circle cx="2.500" cy="2.500" r="1.600" fill="none" stroke="#ced0d6" stroke-width="1.100"/></svg><div class="st" style="left:578px;top:698px;">seroduct</div><div class="st" style="left:975px;top:698px;letter-spacing:-.27px">97:104 (5 chars)</div><div class="st" style="left:1092px;top:698px;transform:scaleX(.85);transform-origin:0 50%">CRLF</div><div class="st" style="left:1140px;top:698px;">UTF-8</div><svg style="left:1197px;top:705px" width="16" height="15" viewBox="0 0 16 15"><path d="M1.600 1.600h12.400v9.200H8.400l-3 2.700v-2.700H1.600z" fill="none" stroke="#ced0d6" stroke-width="1.3" stroke-linejoin="round" stroke-linecap="round"/><path d="M7.800 3.600v3.600" stroke="#ced0d6" stroke-width="1.400"/><circle cx="7.800" cy="8.900" r=".8" fill="#ced0d6"/></svg><svg style="left:1228px;top:704px" width="18" height="17" viewBox="0 0 18 17"><path d="M2.500 6.500C1.300 7.300.800 8.200.800 9.500c.900 2.500 3.500 3.800 6.700 4M2.700 7.300V4.800c0-1.700 1-2.600 2.700-2.600S8 3.200 8 4.800c0-1.600 1-2.600 2.700-2.600s2.700.900 2.700 2.600v1.400M2.700 6c0 1.200 1 1.800 2.700 1.800S8 6.800 8 4.900c0 1.900 1.100 2.900 2.700 2.900" fill="none" stroke="#ced0d6" stroke-width="1.5" stroke-linejoin="round" stroke-linecap="round"/><circle cx="12.400" cy="12" r="4" fill="#57965c"/><path d="M10.600 12l1.300 1.300 2.300-2.500" fill="none" stroke="#2b2d30" stroke-width="1.200"/></svg><div class="st" style="left:1260px;top:698px;letter-spacing:-.25px">4 spaces</div><svg style="left:1333px;top:705px" width="16" height="15" viewBox="0 0 16 15"><rect x="1.600" y="6.300" width="9.600" height="7.200" rx="1.200" fill="none" stroke="#ced0d6" stroke-width="1.3" stroke-linejoin="round" stroke-linecap="round"/><path d="M9 6.300V4a2.600 2.600 0 0 1 5.200 0v1.600" fill="none" stroke="#ced0d6" stroke-width="1.3" stroke-linejoin="round" stroke-linecap="round"/><circle cx="6.400" cy="9.900" r=".9" fill="#ced0d6"/></svg><div style="left:0px;top:728px;width:1366px;height:40px;background:linear-gradient(90deg,#3a2f20 0,#352c1e 40px,#221f18 400px,#1c1b17 500px,#1b1a17 800px,#231f18 900px,#2b261b 1000px,#2d271b 1150px,#2a2419 1366px);"></div><svg style="left:16px;top:740px" width="16" height="16" viewBox="0 0 16 16"><path d="M0 2.300l6.600-.900v6.200H0zM7.400 1.300L16 0v7.600H7.400zM0 8.400h6.600v6.200L0 13.700zM7.400 8.400H16V16l-8.600-1.300z" fill="#fff"/></svg><div style="left:48px;top:728px;width:343px;height:40px;background:#f2f2f2;border-top:1px solid #fbfbfb;border-bottom:1px solid #c4c4c4"></div><svg style="left:59px;top:739px" width="18" height="18" viewBox="0 0 18 18"><circle cx="11.500" cy="6.300" r="4.900" fill="none" stroke="#1a1a1a" stroke-width="1.300"/><path d="M8 9.900L1.300 16.500" stroke="#1a1a1a" stroke-width="1.400"/></svg><div class="" style="left:88px;top:739px;font-size:14.400px;color:#2b2b2b;line-height:20px;white-space:nowrap">Type here to search</div><svg style="left:407px;top:739px" width="18" height="17" viewBox="0 0 18 17"><g shape-rendering="crispEdges" fill="none" stroke="#fff" stroke-width="1"><path d="M1.500 1v2.500h10V1M1.500 16v-2.500h10V16"/><rect x="1.500" y="6.500" width="10" height="5"/><path d="M15.500 1v15"/><rect x="14" y="5" width="3" height="3" fill="#fff" stroke="none"/></g></svg><svg style="left:455px;top:736px" width="24" height="24" viewBox="0 0 24 24"><path d="M13 9.500h9.500l1.200 1.300v1.400H13.800z" fill="#d4d7de"/><path d="M13.800 11h9.900v1.400h-9.900z" fill="#8f949e"/><rect x="11" y=".700" width="10.500" height="8.300" fill="#d4d7de" stroke="#6a6f7a" stroke-width=".6"/><rect x="12.400" y="2" width="7.700" height="5.700" fill="#0a12e6"/><path d="M.700 19h14.600v3.300H.700z" fill="#d9dce2"/><path d="M.700 21.300h14.600v1.400H.700z" fill="#9a9fa8"/><rect x="3" y="10.800" width="10" height="8" fill="#d4d7de" stroke="#6a6f7a" stroke-width=".6"/><rect x="4.300" y="12.100" width="7.400" height="5.400" fill="#0a12e6"/><path d="M17 3.500l-7.500 6h3l-6.500 6.500 9-5.500h-3l5.500-6z" fill="#ffee1a" stroke="#b8a600" stroke-width=".4"/></svg><svg style="left:504px;top:738px" width="24" height="20" viewBox="0 0 24 20"><path d="M1 2.200A1.200 1.200 0 0 1 2.200 1h6.300l1.800 1.800H22A1.200 1.200 0 0 1 23.200 4v2H1z" fill="#e9a52b"/><path d="M1 5h22.200v13a1 1 0 0 1-1 1H2a1 1 0 0 1-1-1z" fill="#fbd466"/><path d="M5.500 12.200A1.200 1.200 0 0 1 6.700 11h10.800a1.200 1.200 0 0 1 1.200 1.200V19H5.500z" fill="#3c8fe0"/><path d="M9 15h6.200v4H9z" fill="#fbd466"/></svg><svg style="left:552px;top:736px" width="25" height="25" viewBox="0 0 25 25"><path d="M8 6.500V5a4.500 4.500 0 0 1 9 0v1.500" fill="none" stroke="#2fa3e6" stroke-width="1.700"/><path d="M1 8a2 2 0 0 1 2-2h19a2 2 0 0 1 2 2v12.500a3.500 3.500 0 0 1-3.500 3.500h-16A3.500 3.500 0 0 1 1 20.500z" fill="#f5f5f5"/><rect x="8" y="10.500" width="4" height="4" fill="#f25022"/><rect x="13" y="10.500" width="4" height="4" fill="#7fba00"/><rect x="8" y="15.500" width="4" height="4" fill="#00a4ef"/><rect x="13" y="15.500" width="4" height="4" fill="#ffb900"/></svg><div style="left:602px;top:736px;width:24px;height:24px;background:#4a4a4a;border-radius:3px"></div><svg style="left:607px;top:739px" width="14" height="18" viewBox="0 0 14 18"><path d="M13 1v4.300L1 9V4.700zM1 7.300l12 3.700v4.300L1 11.600zM13 13.600v0M1 13.300l12-3.600v4.200L1 17.600z" fill="#ff9800"/></svg><svg style="left:651px;top:736px" width="24" height="23" viewBox="0 0 24 23"><path d="M4 8.500L12.500.800a2 2 0 0 1 2.600 0L23.500 8.500V19a2.500 2.500 0 0 1-2.500 2.500H6.500z" fill="#1a6fd4"/><path d="M6 6.800L13.800 2l7.700 4.800v6L13.800 17 6 12.800z" fill="#7b83eb" opacity=".9"/><path d="M7 9.500l7-4.300 7.500 4.600v5L14 19l-7-4z" fill="#35b8f1"/><path d="M4 10l19.500 11.200c-.500.200-1 .3-1.500.3H6.500L4 19z" fill="#1490df"/><path d="M23.500 9.500L8 21.500h13a2.500 2.500 0 0 0 2.500-2.500z" fill="#28a8ea"/><rect x="0" y="11" width="10.500" height="10.500" rx="2" fill="#0f5bbd"/><circle cx="5.200" cy="16.200" r="2.700" fill="none" stroke="#fff" stroke-width="1.500"/></svg><svg style="left:700px;top:736px" width="24" height="24" viewBox="0 0 24 24"><circle cx="12" cy="12" r="11.400" fill="#1ed760"/><path d="M5.800 8.600c4.300-1.300 8.800-1 12.700 1.100M6.700 12.300c3.700-1 7.300-.700 10.500 1.100M7.600 15.700c2.900-.700 5.600-.500 8 .9" fill="none" stroke="#111" stroke-width="1.900" stroke-linecap="round"/></svg><svg style="left:749px;top:736px" width="24" height="24" viewBox="0 0 24 24"><defs><linearGradient id="e1" x1="0" y1="0" x2="1" y2="1"><stop offset="0" stop-color="#37c3f0"/><stop offset="1" stop-color="#1b74d1"/></linearGradient><linearGradient id="e2" x1="0" y1="1" x2="1" y2="0"><stop offset="0" stop-color="#2fbde8"/><stop offset="1" stop-color="#6fdc62"/></linearGradient></defs><circle cx="12" cy="12" r="12" fill="#0c59a4"/><path d="M21.700 17.800A12 12 0 0 1 1.200 17C-.5 11 3 3.500 10 1.200c-5 3-6.500 9-3 13.500 2.500 3.300 7 4.800 11 3.600 1.500-.4 2.800-1 3.700-.5z" fill="url(#e1)"/><path d="M.600 9.500C2 3.500 7 0 12 0c6.500 0 12 5 12 10.500 0 3-2.200 5-5 5-2 0-4.500-.800-4.500-2.200 0-.800 1-1.200 1-3 0-2.500-2.200-4.800-5.500-4.800C6 5.500 1.500 8 .600 9.500z" fill="url(#e2)"/><path d="M9.800 13c0 5 4.500 8.500 8.500 7.700-3 1.500-7.300.5-9.300-2.700-1.500-2.400-1.200-5.500.800-7.200z" fill="#0c59a4" opacity=".7"/></svg><svg style="left:798px;top:736px" width="24" height="24" viewBox="0 0 24 24"><circle cx="12" cy="12" r="12" fill="#fff"/><path d="M12 0a12 12 0 0 1 10.400 6H12a6 6 0 0 0-5.200 3L3.200 3.800A12 12 0 0 1 12 0z" fill="#ea4335"/><path d="M1.600 6a12 12 0 0 1 1.600-2.200L8.400 12.800 6.800 9z" fill="#ea4335"/><path d="M22.400 6A12 12 0 0 1 11 24l5.800-9a6 6 0 0 0 .4-6l-.4-3z" fill="#fbbc05"/><path d="M3.200 3.800L6.800 15a6 6 0 0 0 6.200 2.900L11 24A12 12 0 0 1 1.600 6z" fill="#34a853"/><path d="M6.800 15a6 6 0 0 0 10 0l-5.800 9a12 12 0 0 1-4.200-9z" fill="#34a853"/><circle cx="12" cy="12" r="5.600" fill="#fff"/><circle cx="12" cy="12" r="4.400" fill="#4285f4"/></svg><div style="left:835px;top:728px;width:48px;height:40px;background:#54514a;"></div><svg style="left:846px;top:735px" width="26" height="26" viewBox="0 0 26 26"><circle cx="13" cy="13" r="11.800" fill="#fff" stroke="#fff" stroke-width="1.600" stroke-dasharray="3.100 1.500"/><circle cx="13" cy="13" r="11" fill="#fff"/><path d="M13 7.500L8.300 19.500M13 7.500l4.700 12M9.600 16c2 1.300 4.800 1.300 6.800 0" fill="none" stroke="#3b7de8" stroke-width="2" stroke-linecap="round"/><circle cx="13" cy="6.600" r="1.900" fill="#fff" stroke="#1d2a44" stroke-width="1.100"/><path d="M17.500 11.500l2.500 1.600-2.500 1.500z" fill="#3ddc84"/></svg><div style="left:496px;top:766px;width:40px;height:2px;background:#76b9ed;"></div><div style="left:594px;top:766px;width:38px;height:2px;background:#76b9ed;"></div><div style="left:692px;top:766px;width:40px;height:2px;background:#76b9ed;"></div><div style="left:790px;top:766px;width:40px;height:2px;background:#76b9ed;"></div><div style="left:835px;top:766px;width:48px;height:2px;background:#76b9ed;"></div><svg style="left:970px;top:734px" width="28" height="28" viewBox="0 0 28 28"><path d="M2.600 16.300C3.600 11 7.500 7.600 12 7.600s8.600 3.400 9.600 8.700c-1.100-1-2.500-1-3.600 0-1.200-1-2.600-1-3.800 0-1.200-1-2.800-1-4 0-1.200-1-2.600-1-3.800 0-1.100-1-2.700-1-3.800 0z" fill="#63b3f0"/><path d="M12 7.600c-2 2.500-2.800 5.500-2.800 8.400M12 7.600c2 2.500 2.800 5.500 2.800 8.400" stroke="#9ccff7" stroke-width=".7" fill="none"/><path d="M11.900 15.500v8.300a1.800 1.800 0 0 1-3.500 0" fill="none" stroke="#8d9097" stroke-width="1.500"/><path d="M15 2.300l-1 2M18.600 1.800l-1 2M20.600 6l-1 2M24.500 5l-1 2M24.400 10.500l-1 2" stroke="#3f9ff0" stroke-width="1.600" stroke-linecap="round"/></svg><div class="" style="left:1004px;top:738px;font-size:14px;color:#fff;line-height:20px;white-space:nowrap">1 cm of rain Tue</div><svg style="left:1128px;top:743px" width="14" height="9" viewBox="0 0 14 9"><path d="M1 8l5.800-6 5.800 6" fill="none" stroke="#fff" stroke-width="1.400"/></svg><svg style="left:1149px;top:738px" width="22" height="22" viewBox="0 0 22 22"><path d="M1.800 3.800L17 2.400v12.800L1.800 14z" fill="none" stroke="#fff" stroke-width="1.200" stroke-linejoin="round"/><path d="M6 7c1.800-2 5-2 6.600-.2M12.800 4.800v2.300h-2.300M12.500 10.800c-1.800 2-5 2-6.600.2M5.700 13v-2.300H8" fill="none" stroke="#fff" stroke-width="1.100"/><circle cx="14.300" cy="14.800" r="3.600" fill="#2d7fe3"/></svg><svg style="left:1175px;top:742px" width="18" height="12" viewBox="0 0 18 12"><rect x="1.100" y="1.100" width="13" height="9.200" rx="1" fill="none" stroke="#fff" stroke-width="1.200"/><rect x="3" y="3" width="7" height="5.400" fill="#fff"/><rect x="14.600" y="3.900" width="1.500" height="3.600" fill="#fff"/></svg><svg style="left:1198px;top:740px" width="20" height="16" viewBox="0 0 20 16"><path d="M1.300 5.700h2.700L7.800 2v12L4 10.300H1.300z" fill="none" stroke="#fff" stroke-width="1.100" stroke-linejoin="round"/><path d="M10.200 5.600a3.300 3.300 0 0 1 0 4.800M12.300 3.600a6.200 6.200 0 0 1 0 8.800M14.500 1.600a9 9 0 0 1 0 12.800" fill="none" stroke="#fff" stroke-width="1"/></svg><div class="" style="left:1225px;top:739px;font-size:11.300px;color:#fff;line-height:18px">ENG</div><div class="" style="left:1255px;top:731px;width:58px;text-align:center;font-size:11.900px;color:#fff;line-height:18px"><span style="letter-spacing:-.7px">11:51</span><br>10/26/25</div><svg style="left:1324px;top:739px" width="26" height="26" viewBox="0 0 26 26"><path d="M1.500 1.500h15.500v11H6.300L1.500 16.300z" fill="#fff"/><path d="M4.500 4.700h9.500M4.500 7.200h9.500M4.500 9.700h6.500" stroke="#2a2419" stroke-width="1"/><circle cx="16.600" cy="16.400" r="7.700" fill="#33302a" stroke="#8e8b84" stroke-width="1.100"/></svg><div class="" style="left:1335.6px;top:748.5px;width:10px;text-align:center;font-size:12.500px;color:#fff;line-height:14px;font-weight:bold">5</div><div style="left:1361px;top:728px;width:1px;height:40px;background:#6a655c;"></div></div></body></html>
